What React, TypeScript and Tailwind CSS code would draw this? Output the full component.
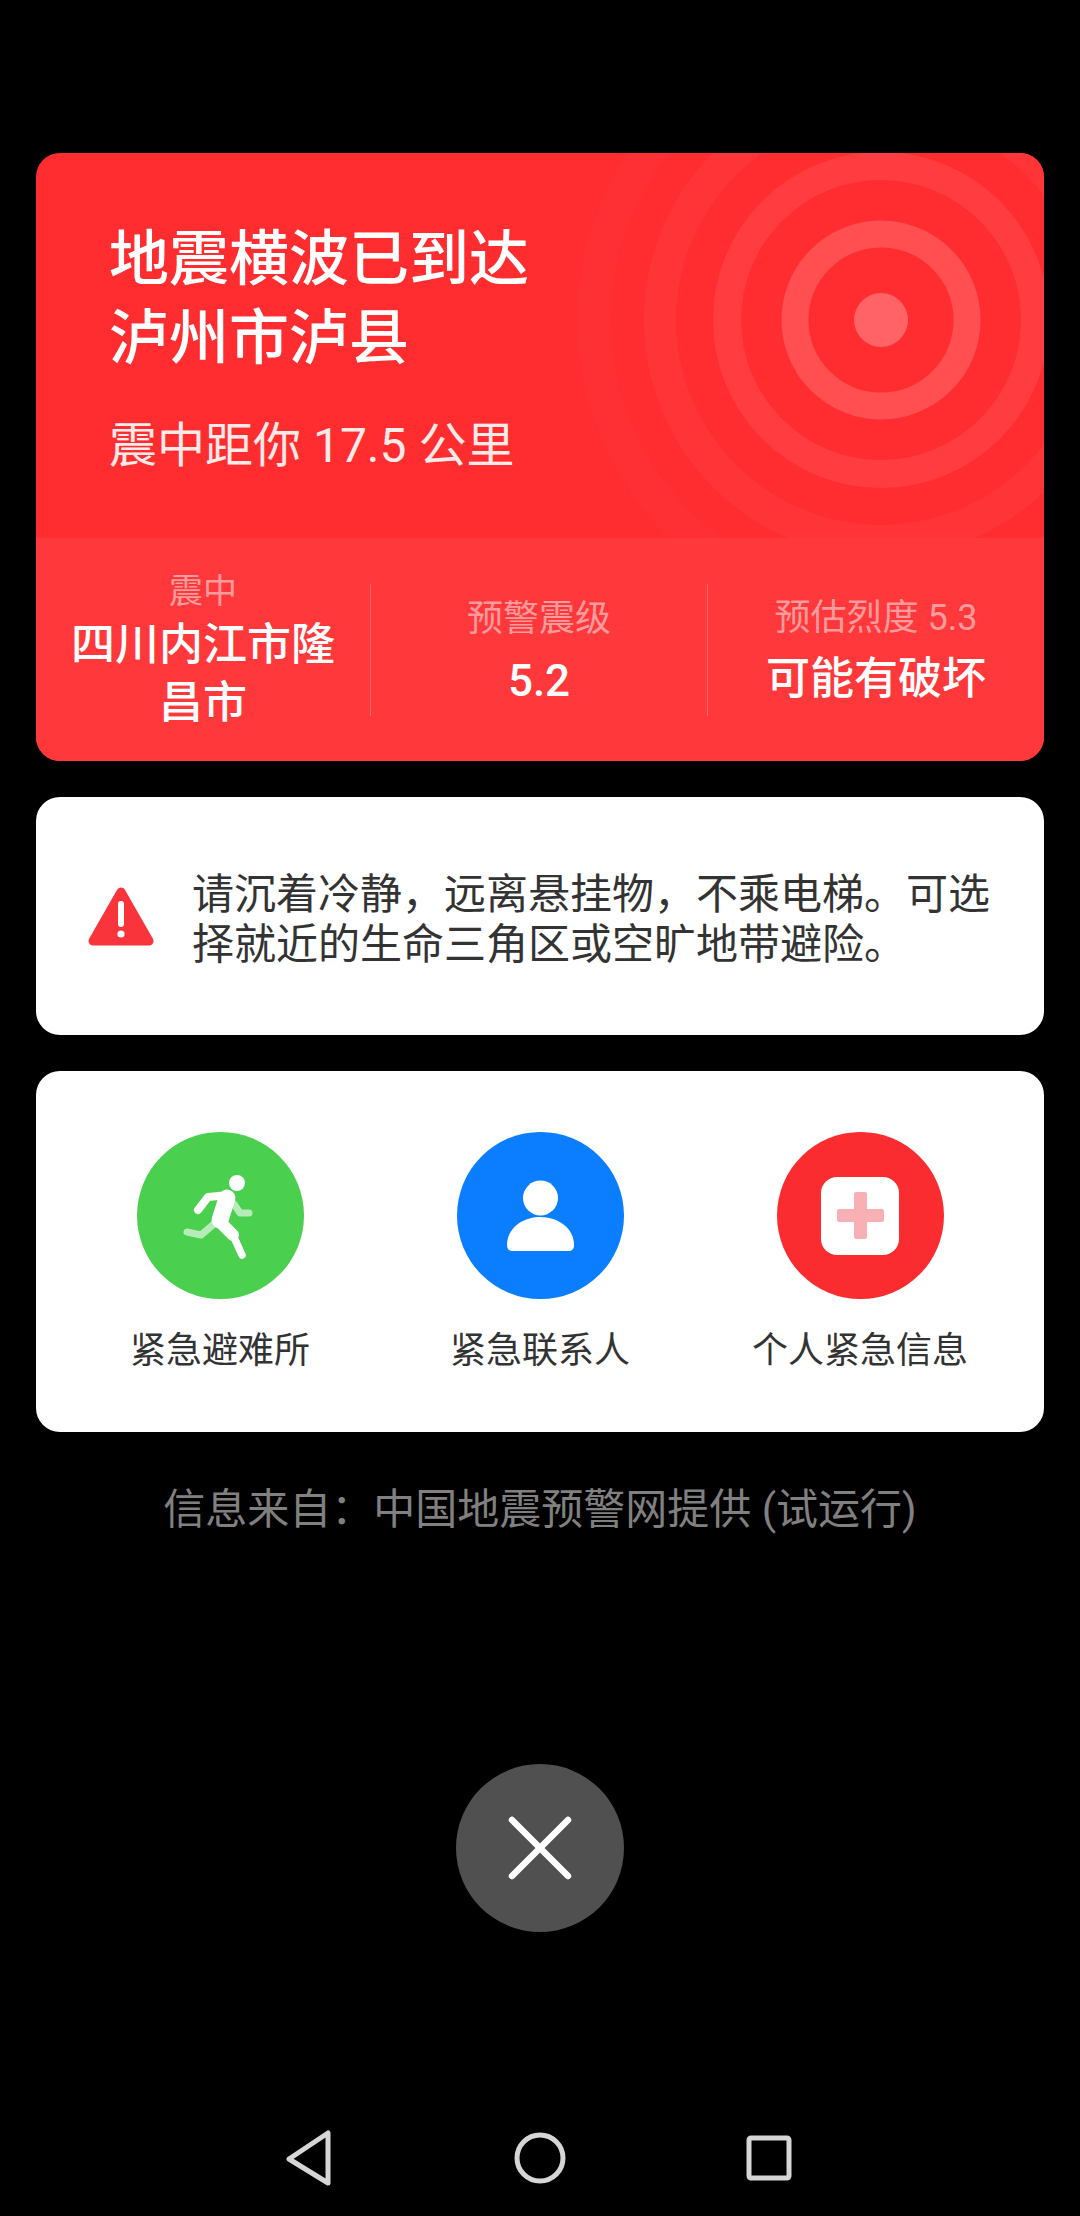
const RingArt = () => (
  <svg className="absolute left-0 top-0 h-[385px] w-[1008px]" viewBox="0 0 1008 385">
    <g fill="none">
      <circle cx="845" cy="167" r="287" stroke="#ff3033" strokeWidth="34" />
      <circle cx="845" cy="167" r="221" stroke="#ff3437" strokeWidth="32" />
      <circle cx="845" cy="167" r="154" stroke="#ff3d40" strokeWidth="28" />
      <circle cx="845" cy="167" r="86" stroke="#ff4f51" strokeWidth="27" />
    </g>
    <circle cx="845" cy="167" r="27" fill="#ff6366" />
  </svg>
);

const WarnIcon = () => (
  <svg className="mt-[2px] h-[60px] w-[66px] shrink-0" viewBox="0 0 66 60">
    <path
      d="M33 5 L61 54 H5 Z"
      fill="#f9353b"
      stroke="#f9353b"
      strokeWidth="9"
      strokeLinejoin="round"
    />
    <path d="M33 17 V37" stroke="#fff" strokeWidth="6" strokeLinecap="round" />
    <circle cx="33" cy="47" r="3.6" fill="#fff" />
  </svg>
);

const RunnerIcon = () => (
  <svg className="h-[167px] w-[167px]" viewBox="0 0 167 167" fill="none" strokeLinecap="round" strokeLinejoin="round">
    <g stroke="#fff" strokeOpacity="0.6" strokeWidth="7">
      <path d="M97 72 L103 81 H112" />
      <path d="M77 92 L64 103 L50 100" />
    </g>
    <circle cx="100" cy="51" r="8" fill="#fff" />
    <g stroke="#fff">
      <path d="M61 78 L71 65 L92 63" strokeWidth="8" />
      <path d="M90 66 L83 88" strokeWidth="17" />
      <path d="M83 90 L96 103" strokeWidth="12" />
      <path d="M96 103 L105 123" strokeWidth="7.5" />
    </g>
  </svg>
);

const PersonIcon = () => (
  <svg className="h-[167px] w-[167px]" viewBox="0 0 167 167">
    <circle cx="83.5" cy="66" r="17.5" fill="#fff" />
    <path
      d="M50 113 C50 96 66 85 83.5 85 C101 85 117 96 117 113 C117 117 115 119 111 119 H56 C52 119 50 117 50 113 Z"
      fill="#fff"
    />
  </svg>
);

const MedicalIcon = () => (
  <div className="flex h-[78px] w-[78px] items-center justify-center rounded-[16px] bg-white">
    <svg className="h-[47px] w-[47px]" viewBox="0 0 47 47">
      <path
        d="M17 2 a2 2 0 0 1 2 -2 h9 a2 2 0 0 1 2 2 v15 h15 a2 2 0 0 1 2 2 v9 a2 2 0 0 1 -2 2 h-15 v15 a2 2 0 0 1 -2 2 h-9 a2 2 0 0 1 -2 -2 v-15 h-15 a2 2 0 0 1 -2 -2 v-9 a2 2 0 0 1 2 -2 h15 Z"
        fill="#f9b0b4"
      />
    </svg>
  </div>
);

export default function App() {
  return (
    <div
      lang="zh-CN"
      className="flex h-[2216px] w-[1080px] flex-col overflow-hidden bg-black font-['Roboto','Noto_Sans_CJK_SC',sans-serif]"
    >
      <div className="flex flex-col gap-[36px] px-[36px] pt-[153px]">
        <div className="overflow-hidden rounded-[24px] bg-[#ff2d30]">
          <div className="relative h-[385px] overflow-hidden">
            <RingArt />
            <div className="relative pl-[73px] pt-[67px] text-white">
              <h1 className="text-[60px] font-medium leading-[79px]">
                地震横波已到达
                <br />
                泸州市泸县
              </h1>
              <p className="mt-[38px] text-[48px] leading-[60px] text-white/90">震中距你 17.5 公里</p>
            </div>
          </div>
          <div className="flex h-[223px] items-center bg-[#ff383b] text-center">
            <div className="flex w-[334px] shrink-0 flex-col items-center">
              <span className="text-[34px] leading-[46px] text-white/50">震中</span>
              <span className="mt-[2px] w-[280px] text-[44px] font-medium leading-[58px] text-white">四川内江市隆昌市</span>
            </div>
            <div className="flex h-[132px] w-[338px] shrink-0 flex-col items-center justify-center gap-[12px] border-x border-white/25">
              <span className="text-[36px] leading-[50px] text-white/50">预警震级</span>
              <span className="text-[44px] font-medium leading-[50px] text-white">5.2</span>
            </div>
            <div className="flex flex-1 flex-col items-center gap-[8px]">
              <span className="text-[36px] leading-[50px] text-white/50">预估烈度 5.3</span>
              <span className="text-[44px] font-medium leading-[56px] text-white">可能有破坏</span>
            </div>
          </div>
        </div>

        <div className="flex h-[238px] items-center gap-[38px] rounded-[24px] bg-white pl-[52px] pr-[50px]">
          <WarnIcon />
          <p className="pt-[7px] text-[42px] leading-[50px] text-[#333]">
            {"请沉着冷静\uFF0C远离悬挂物\uFF0C不乘电梯。可选择就近的生命三角区或空旷地带避险。"}
          </p>
        </div>

        <div className="grid h-[361px] grid-cols-3 rounded-[24px] bg-white px-[24px] pt-[61px]">
          <div className="flex flex-col items-center">
            <div className="flex h-[167px] w-[167px] items-center justify-center rounded-full bg-[#4acf4f]">
              <RunnerIcon />
            </div>
            <span className="mt-[27px] text-[36px] leading-[50px] text-[#333]">紧急避难所</span>
          </div>
          <div className="flex flex-col items-center">
            <div className="flex h-[167px] w-[167px] items-center justify-center rounded-full bg-[#0a7eff]">
              <PersonIcon />
            </div>
            <span className="mt-[27px] text-[36px] leading-[50px] text-[#333]">紧急联系人</span>
          </div>
          <div className="flex flex-col items-center">
            <div className="flex h-[167px] w-[167px] items-center justify-center rounded-full bg-[#fb2c30]">
              <MedicalIcon />
            </div>
            <span className="mt-[27px] text-[36px] leading-[50px] text-[#333]">个人紧急信息</span>
          </div>
        </div>
      </div>

      <p className="mt-[49px] text-center text-[42px] leading-[58px] text-[#808080]">
        {"信息来自\uFF1A中国地震预警网提供 (试运行)"}
      </p>

      <div className="mt-[225px] flex justify-center">
        <div className="flex h-[168px] w-[168px] items-center justify-center rounded-full bg-[#505050]">
          <svg className="h-[66px] w-[66px]" viewBox="0 0 66 66" fill="none" stroke="#fff" strokeWidth="6.5" strokeLinecap="round">
            <path d="M5 5 L61 61 M61 5 L5 61" />
          </svg>
        </div>
      </div>

      <div className="mt-[198px] flex items-center justify-center pr-[3px]">
        <svg className="h-[56px] w-[48px]" viewBox="0 0 48 56" fill="none" stroke="#d6d6d6" strokeWidth="5" strokeLinejoin="round">
          <path d="M43 3 V53 L4 29 Z" />
        </svg>
        <svg className="ml-[181px] h-[52px] w-[52px]" viewBox="0 0 52 52" fill="none" stroke="#d6d6d6" strokeWidth="5">
          <circle cx="26" cy="26" r="23" />
        </svg>
        <svg className="ml-[180px] h-[46px] w-[46px]" viewBox="0 0 46 46" fill="none" stroke="#d6d6d6" strokeWidth="5" strokeLinejoin="round">
          <rect x="3" y="3" width="40" height="40" rx="2" />
        </svg>
      </div>
    </div>
  );
}
